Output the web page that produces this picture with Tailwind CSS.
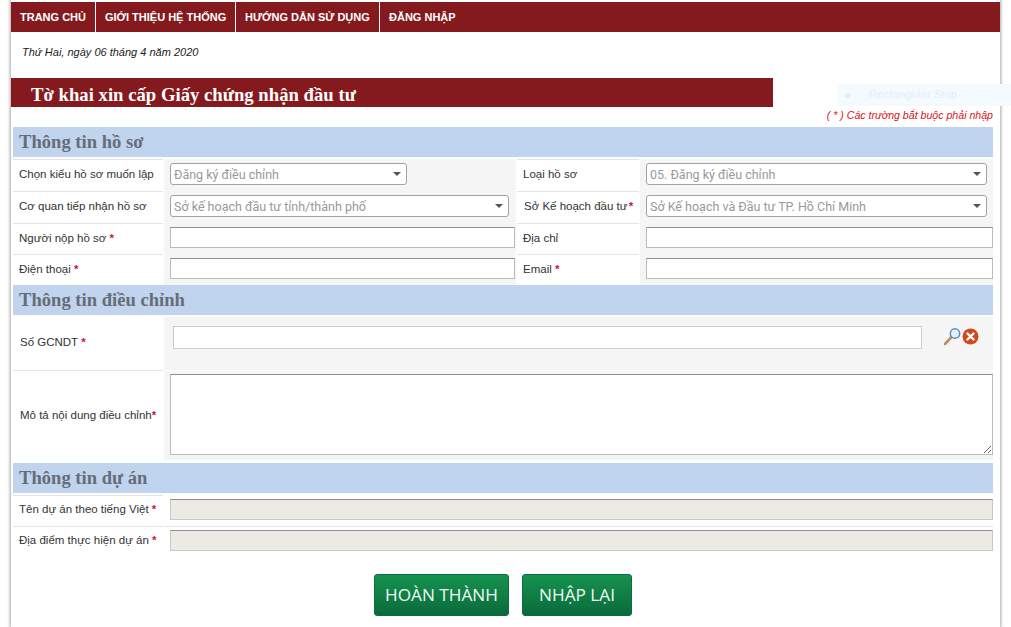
<!DOCTYPE html>
<html lang="en">
<head>
  <meta charset="UTF-8" />
  <title>Tờ khai xin cấp Giấy chứng nhận đầu tư</title>
  <script src="https://cdn.jsdelivr.net/npm/@tailwindcss/browser@4"></script>
</head>
<body class="bg-white h-[627px] overflow-hidden relative font-['Liberation_Sans',sans-serif]">

  <!-- Page frame -->
  <div class="ml-[11px] w-[989px] h-[627px] bg-white shadow-[0_0_3px_1px_#a8a8a8] pt-[2px]">

    <!-- Navbar -->
    <nav class="h-[30px] bg-[#851a1e] flex text-white text-[11px] font-bold leading-[30px] whitespace-nowrap">
      <a class="pl-[9px] border-r border-white w-[85px]">TRANG CHỦ</a>
      <a class="pl-[9px] border-r border-white w-[140px]">GIỚI THIỆU HỆ THỐNG</a>
      <a class="pl-[9px] border-r border-white w-[144px]">HƯỚNG DẪN SỬ DỤNG</a>
      <a class="pl-[9px]">ĐĂNG NHẬP</a>
    </nav>

    <p class="pl-[11px] pt-[13px] h-[46px] text-[11px] italic leading-[14px] text-[#222]">Thứ Hai, ngày 06 tháng 4 năm 2020</p>

    <!-- Title -->
    <h1 class="w-[762px] h-[29px] bg-[#851a1e] pl-[20px] text-white text-[18.72px] font-bold leading-[33px] font-['Liberation_Serif',serif]">Tờ khai xin cấp Giấy chứng nhận đầu tư</h1>

    <p class="h-[20px] pr-[7px] text-right text-[10.6px] italic leading-[16px] text-[#d8131b]">( * ) Các trường bắt buộc phải nhập</p>

    <div class="ml-[2px] w-[980px]">

      <!-- Thông tin hồ sơ -->
      <h2 class="h-[30px] bg-[#c1d4ee] pl-[6px] text-[18.6px] font-bold leading-[30px] text-[#666d78] font-['Liberation_Serif',serif]">Thông tin hồ sơ</h2>

      <div class="mt-[2px] grid grid-cols-[150px_352px_122px_353px] gap-x-[1px] text-[11.5px] text-[#333]">
        <!-- row 1 -->
        <div class="h-[32px] border-t border-[#e4e4e4] pl-[6px] leading-[28px]">Chọn kiểu hồ sơ muốn lập</div>
        <div class="h-[32px] bg-[#f5f5f5] pl-[6px] pt-[4px]">
          <div class="w-[237px] h-[22px] bg-white border border-[#a3a3a3] rounded-[3px] flex items-center justify-between pl-[3px] pr-[5px] text-[12.5px] text-[#999] font-['Roboto',sans-serif]">
            <span class="pt-[3px]">Đăng ký điều chỉnh</span><span class="border-x-[4px] border-t-[4px] border-x-transparent border-t-[#555]"></span>
          </div>
        </div>
        <div class="h-[32px] border-t border-[#e4e4e4] pl-[6px] leading-[28px]">Loại hồ sơ</div>
        <div class="h-[32px] bg-[#f5f5f5] pl-[6px] pt-[4px]">
          <div class="w-[341px] h-[22px] bg-white border border-[#a3a3a3] rounded-[3px] flex items-center justify-between pl-[3px] pr-[5px] text-[12.5px] text-[#999] font-['Roboto',sans-serif]">
            <span class="pt-[3px]">05. Đăng ký điều chỉnh</span><span class="border-x-[4px] border-t-[4px] border-x-transparent border-t-[#555]"></span>
          </div>
        </div>
        <!-- row 2 -->
        <div class="h-[32px] border-t border-[#e4e4e4] pl-[6px] leading-[28px]">Cơ quan tiếp nhận hồ sơ</div>
        <div class="h-[32px] bg-[#f5f5f5] pl-[6px] pt-[4px]">
          <div class="w-[339px] h-[22px] bg-white border border-[#a3a3a3] rounded-[3px] flex items-center justify-between pl-[3px] pr-[5px] text-[12.5px] text-[#999] font-['Roboto',sans-serif]">
            <span class="pt-[3px]">Sở kế hoạch đầu tư tỉnh/thành phố</span><span class="border-x-[4px] border-t-[4px] border-x-transparent border-t-[#555]"></span>
          </div>
        </div>
        <div class="h-[32px] border-t border-[#e4e4e4] pl-[7px] leading-[28px] whitespace-nowrap">Sở Kế hoạch đầu tư <span class="-ml-[2px] text-[#d0103a] font-bold">*</span></div>
        <div class="h-[32px] bg-[#f5f5f5] pl-[6px] pt-[4px]">
          <div class="w-[341px] h-[22px] bg-white border border-[#a3a3a3] rounded-[3px] flex items-center justify-between pl-[3px] pr-[5px] text-[12.5px] text-[#999] font-['Roboto',sans-serif]">
            <span class="pt-[3px]">Sở Kế hoạch và Đầu tư TP. Hồ Chí Minh</span><span class="border-x-[4px] border-t-[4px] border-x-transparent border-t-[#555]"></span>
          </div>
        </div>
        <!-- row 3 -->
        <div class="h-[31px] border-t border-[#e4e4e4] pl-[6px] leading-[28px]">Người nộp hồ sơ <span class="text-[#d0103a] font-bold">*</span></div>
        <div class="h-[31px] bg-[#f5f5f5] pl-[6px] pt-[4px]">
          <input class="block w-[345px] h-[21px] bg-white border border-[#bbb] border-t-[#8f8f8f]" />
        </div>
        <div class="h-[31px] border-t border-[#e4e4e4] pl-[6px] leading-[28px]">Địa chỉ</div>
        <div class="h-[31px] bg-[#f5f5f5] pl-[6px] pt-[4px]">
          <input class="block w-[347px] h-[21px] bg-white border border-[#bbb] border-t-[#8f8f8f]" />
        </div>
        <!-- row 4 -->
        <div class="h-[31px] border-t border-[#e4e4e4] pl-[6px] leading-[28px]">Điện thoại <span class="text-[#d0103a] font-bold">*</span></div>
        <div class="h-[31px] bg-[#f5f5f5] pl-[6px] pt-[4px]">
          <input class="block w-[345px] h-[21px] bg-white border border-[#bbb] border-t-[#8f8f8f]" />
        </div>
        <div class="h-[31px] border-t border-[#e4e4e4] pl-[6px] leading-[28px]">Email <span class="text-[#d0103a] font-bold">*</span></div>
        <div class="h-[31px] bg-[#f5f5f5] pl-[6px] pt-[4px]">
          <input class="block w-[347px] h-[21px] bg-white border border-[#bbb] border-t-[#8f8f8f]" />
        </div>
      </div>

      <!-- Thông tin điều chỉnh -->
      <h2 class="h-[30px] bg-[#c1d4ee] pl-[6px] text-[18.6px] font-bold leading-[30px] text-[#666d78] font-['Liberation_Serif',serif]">Thông tin điều chỉnh</h2>

      <div class="mt-[2px] grid grid-cols-[150px_829px] gap-x-[1px] text-[11.5px] text-[#333]">
        <div class="h-[54px] border-b border-[#e4e4e4] pl-[7px] pb-[2px] flex items-center">
          <span>Số GCNDT <span class="text-[#d0103a] font-bold">*</span></span>
        </div>
        <div class="h-[53px] bg-[#f5f5f5] pl-[9px] pt-[9px] flex items-start">
          <input class="block w-[749px] h-[23px] bg-white border border-[#ccc]" />
          <svg class="ml-[21px] mt-[1px]" width="19" height="19" viewBox="0 0 19 19">
            <path d="M2 17 L9 9.5" stroke="#b7935e" stroke-width="2.6" stroke-linecap="round" />
            <circle cx="12" cy="6.5" r="4.7" fill="#e4f1fb" stroke="#5c8db5" stroke-width="1.5" />
          </svg>
          <svg class="mt-[2px]" width="17" height="17" viewBox="0 0 17 17">
            <circle cx="8.5" cy="8.5" r="8" fill="#cf4a1e" />
            <path d="M5.5 5.5 L11.5 11.5 M11.5 5.5 L5.5 11.5" stroke="#fff" stroke-width="2.4" stroke-linecap="round" />
          </svg>
        </div>
        <div class="h-[89px] pl-[7px] flex items-center">
          <span>Mô tả nội dung điều chỉnh<span class="text-[#d0103a] font-bold">*</span></span>
        </div>
        <div class="h-[89px] bg-[#f5f5f5] pl-[6px] pt-[3px]">
          <textarea class="block w-[823px] h-[81px] bg-white border border-[#bbb] border-t-[#8f8f8f]"></textarea>
        </div>
      </div>

      <!-- Thông tin dự án -->
      <h2 class="mt-[3px] h-[30px] bg-[#c1d4ee] pl-[6px] text-[18.6px] font-bold leading-[30px] text-[#666d78] font-['Liberation_Serif',serif]">Thông tin dự án</h2>

      <div class="mt-[2px] grid grid-cols-[150px_829px] gap-x-[1px] text-[11.5px] text-[#333]">
        <div class="h-[31px] border-t border-[#e4e4e4] pl-[6px] leading-[26px]">Tên dự án theo tiếng Việt <span class="text-[#d0103a] font-bold">*</span></div>
        <div class="h-[31px] pl-[6px] pt-[4px]">
          <input disabled class="block w-[823px] h-[21px] bg-[#ebebe4] border border-[#c8c8c8] border-t-[#8f8f8f]" />
        </div>
        <div class="h-[31px] border-t border-[#e4e4e4] pl-[6px] leading-[26px]">Địa điểm thực hiện dự án <span class="text-[#d0103a] font-bold">*</span></div>
        <div class="h-[31px] border-t border-[#e4e4e4] pl-[6px] pt-[3px]">
          <input disabled class="block w-[823px] h-[21px] bg-[#ebebe4] border border-[#c8c8c8] border-t-[#8f8f8f]" />
        </div>
      </div>

      <!-- Buttons -->
      <div class="mt-[17px] ml-[361px] flex gap-[13px]">
        <button class="w-[135px] h-[42px] rounded-[3px] border border-[#0e6b3e] bg-linear-to-b from-[#16934f] to-[#0b6a3b] text-[17.2px] text-[#eefdf4] font-['Open_Sans',sans-serif]">HOÀN THÀNH</button>
        <button class="w-[110px] h-[42px] rounded-[3px] border border-[#0e6b3e] bg-linear-to-b from-[#16934f] to-[#0b6a3b] text-[17.2px] text-[#eefdf4] font-['Open_Sans',sans-serif]">NHẬP LẠI</button>
      </div>
    </div>
  </div>

  <!-- Ghost of a snipping tool tooltip, lies over the page -->
  <div class="absolute left-[837px] top-[84px] w-[174px] h-[22px] bg-[#f5faff] flex items-center pl-[8px] text-[11.5px] text-[#e6edf3]">
    <span class="w-[5px] h-[5px] rounded-full bg-[#e3ebf3]"></span>
    <span class="ml-[19px]">Rectangular Snip</span>
  </div>
</body>
</html>
